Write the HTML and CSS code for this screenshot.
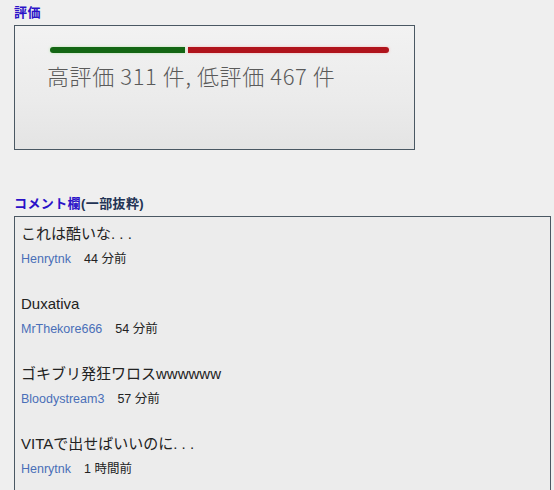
FILE: index.html
```html
<!DOCTYPE html>
<html lang="ja">
<head>
    <meta charset="UTF-8">
    <title>評価とコメント</title>
    <link rel="stylesheet" href="styles.css">
</head>
<body>
    <h2 class="section-title">評価</h2>
    <div class="rating-box">
        <div class="rating-bar">
            <div class="bar-like"></div>
            <div class="bar-dislike"></div>
        </div>
        <p class="rating-text">高評価 311 件, 低評価 467 件</p>
    </div>

    <h2 class="section-title comments-title">コメント欄<span class="sub">(一部抜粋)</span></h2>
    <div class="comment-box">
        <div class="comment">
            <p class="comment-text">これは酷いな. . .</p>
            <p class="comment-meta"><a href="#" class="user">Henrytnk</a><span class="time">44 分前</span></p>
        </div>
        <div class="comment">
            <p class="comment-text">Duxativa</p>
            <p class="comment-meta"><a href="#" class="user">MrThekore666</a><span class="time">54 分前</span></p>
        </div>
        <div class="comment">
            <p class="comment-text">ゴキブリ発狂ワロスwwwwww</p>
            <p class="comment-meta"><a href="#" class="user">Bloodystream3</a><span class="time">57 分前</span></p>
        </div>
        <div class="comment">
            <p class="comment-text">VITAで出せばいいのに. . .</p>
            <p class="comment-meta"><a href="#" class="user">Henrytnk</a><span class="time">1 時間前</span></p>
        </div>
    </div>
</body>
</html>
```

FILE: styles.css
```css
body {
    margin: 0;
    padding: 5px 0 0 14px;
    background-color: #efefef;
    font-family: "Liberation Sans", "Noto Sans CJK JP", sans-serif;
    color: #222;
    overflow: hidden;
}
.section-title {
    margin: 0 0 4px 0;
    font-size: 13px;
    line-height: 16px;
    letter-spacing: 0.4px;
    font-weight: bold;
    color: #2a11c8; /* bright indigo heading */
}
.comments-title {
    margin-top: 46px;
}
.comments-title .sub {
    color: #223355;
}
.rating-box {
    box-sizing: border-box;
    width: 401px;
    height: 125px;
    border: 1px solid #4a5863;
    background: linear-gradient(180deg, #f2f2f2 0%, #ebebeb 60%, #e4e4e4 100%);
    padding: 21px 0 0 32px;
}
.rating-bar {
    display: flex;
    gap: 3px;
    margin-left: 3px;
    width: 339px;
    height: 6px;
}
.bar-like {
    width: 135px;
    background-color: #146614;
    border-radius: 3px 0 0 3px;
    box-shadow: 0 0 3px #b9e6b0;
}
.bar-dislike {
    flex: 1;
    background-color: #b0141c;
    border-radius: 0 3px 3px 0;
    box-shadow: 0 0 3px #f4b8b8;
}
.rating-text {
    margin: 9px 0 0 0;
    font-size: 22px;
    line-height: 26px;
    letter-spacing: 0.6px;
    color: #5a5a5a;
    font-family: "Noto Sans CJK JP", sans-serif;
    font-weight: 300;
}
.comment-box {
    width: 537px;
    height: 300px;
    box-sizing: border-box;
    border: 1px solid #4a5863;
    background-color: #ececec;
    padding: 7px 6px;
}
.comment {
    margin-bottom: 26px;
}
.comment p {
    margin: 0;
}
.comment-text {
    font-size: 15px;
    line-height: 20px;
    color: #222;
}
.comment-meta {
    margin-top: 6px !important;
    font-size: 12.5px;
    line-height: 18px;
    color: #222;
}
.user {
    color: #4a6fb8;
    text-decoration: none;
    margin-right: 13px;
}
```
